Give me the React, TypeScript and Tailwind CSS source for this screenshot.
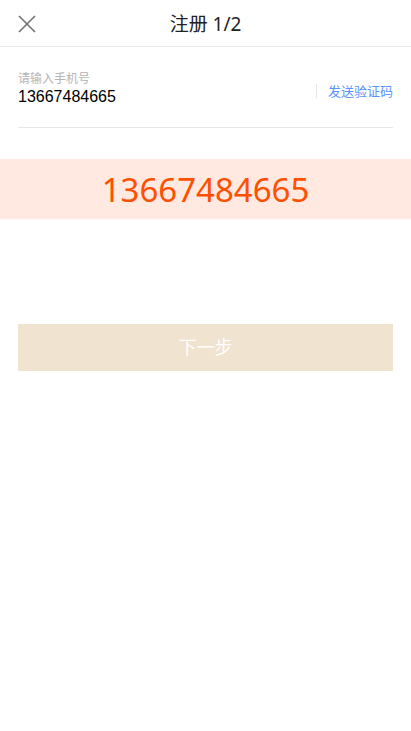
export default function App() {
  const phone = "13667484665";

  return (
    <div className="min-h-[731px] bg-white font-['Noto_Sans','Noto_Sans_CJK_SC',sans-serif]">
      {/* Header */}
      <div className="relative h-[47px] border-b border-[#e8e8e8] flex items-center justify-center">
        <button className="absolute left-[16px] top-[13px] w-[22px] h-[22px] flex items-center justify-center">
          <svg width="20" height="20" viewBox="0 0 20 20" fill="none" stroke="#707070" strokeWidth="1.6">
            <path d="M2 2 L18 18 M18 2 L2 18" />
          </svg>
        </button>
        <h1 className="text-[19px] text-[#222] leading-none mt-[3px]">注册 1/2</h1>
      </div>

      {/* Phone input */}
      <div className="mx-[18px] mt-[24px] pb-[20px] border-b border-[#e8e8e8] flex items-center">
        <div className="flex-1">
          <div className="text-[12px] text-[#b5b5b5] leading-[16px]">请输入手机号</div>
          <div className="text-[16px] text-black leading-[20px] font-['Liberation_Sans',sans-serif]">{phone}</div>
        </div>
        <div className="w-px h-[14px] bg-[#e6e6e6] mt-[4px]" />
        <button className="ml-[11px] mt-[4px] text-[13px] text-[#5b93ff] leading-[20px]">发送验证码</button>
      </div>

      {/* Big number */}
      <div className="mt-[31px] h-[60px] bg-[#ffe9e1] flex items-center justify-center">
        <span className="text-[33px] text-[#ff5000] leading-none">{phone}</span>
      </div>

      {/* Next */}
      <div className="px-[18px] mt-[105px]">
        <button className="w-full h-[47px] bg-[#f0e3d0] text-white text-[18px] flex items-center justify-center">
          下一步
        </button>
      </div>
    </div>
  );
}
